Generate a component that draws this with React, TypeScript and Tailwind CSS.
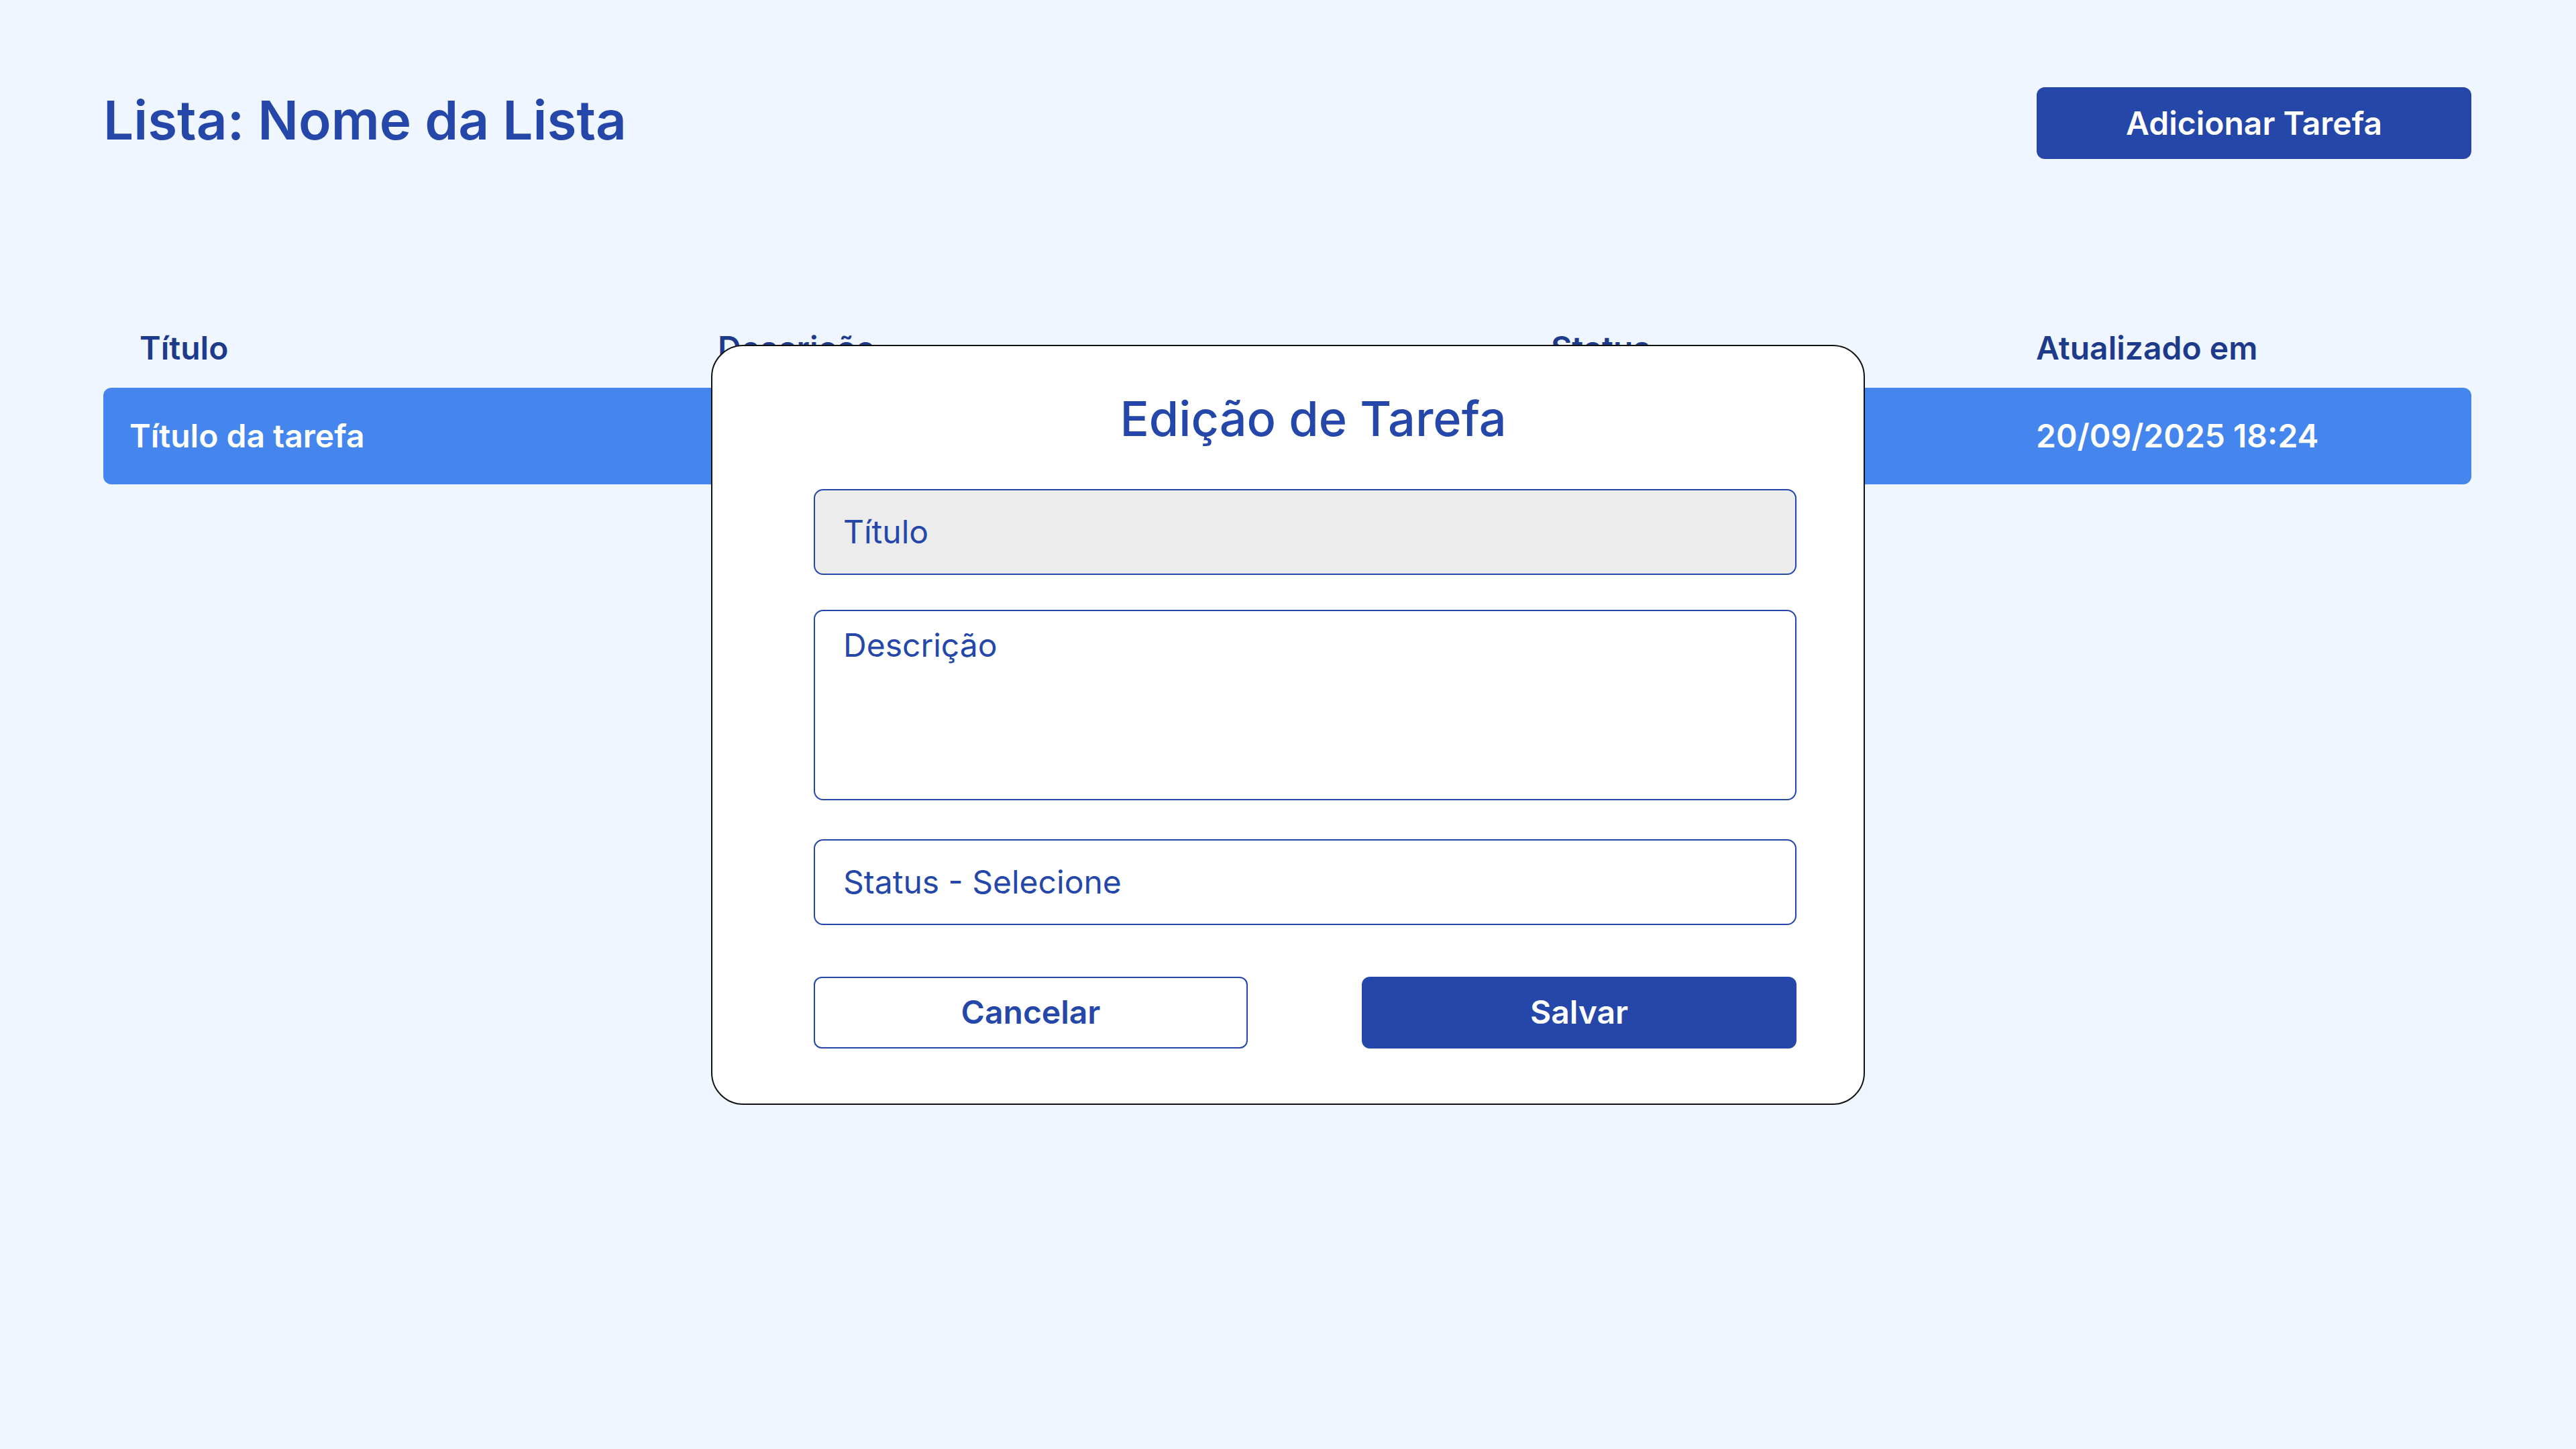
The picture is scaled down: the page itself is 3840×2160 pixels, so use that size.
import React from "react";

export default function App() {
  return (
    <div className="min-h-screen w-full bg-[#eff6ff] font-['Inter',sans-serif] pl-[154px] pr-[156px] relative">
      {/* Header */}
      <div className="flex items-start justify-between pt-[130px]">
        <h1 className="mt-[9px] text-[80px] leading-[80px] font-semibold text-[#2447a9]">
          Lista: Nome da Lista
        </h1>
        <button className="h-[107px] w-[648px] rounded-[12px] bg-[#2447a9] text-white text-[48px] leading-[48px] font-semibold">
          Adicionar Tarefa
        </button>
      </div>

      {/* Table */}
      <div className="mt-[258px]">
        <div className="grid grid-cols-[879px_1242px_721px_1fr] text-[48px] leading-[48px] font-semibold text-[#1e3a8a]">
          <div className="pl-[54px]">Título</div>
          <div className="pl-[37px]">Descrição</div>
          <div className="pl-[37px]">Status</div>
          <div className="pl-[39px]">Atualizado em</div>
        </div>
        <div className="mt-[35px] grid h-[144px] grid-cols-[879px_1242px_721px_1fr] items-center rounded-[12px] bg-[#4486ed] text-[48px] leading-[48px] font-semibold text-white">
          <div className="pl-[39px]">Título da tarefa</div>
          <div className="pl-[39px]">Descrição da tarefa</div>
          <div className="pl-[39px]">Pendente</div>
          <div className="pl-[39px]">20/09/2025 18:24</div>
        </div>
      </div>

      {/* Modal */}
      <div className="fixed inset-0 flex items-center justify-center">
        <div className="w-[1720px] rounded-[48px] border-2 border-[#111111] bg-white pl-[151px] pr-[100px] pt-[72px] pb-[82px]">
          <h2 className="pl-[24px] text-center text-[72px] leading-[72px] font-medium text-[#2447a9]">
            Edição de Tarefa
          </h2>
          <div className="mt-[69px] flex h-[128px] items-center rounded-[14px] border-2 border-[#2447a9] bg-[#ececec] px-[42px] text-[48px] leading-[48px] text-[#2447a9]">
            Título
          </div>
          <div className="mt-[52px] h-[284px] rounded-[14px] border-2 border-[#2447a9] bg-white px-[42px] pt-[27px] text-[48px] leading-[48px] text-[#2447a9]">
            Descrição
          </div>
          <div className="mt-[58px] flex h-[128px] items-center rounded-[14px] border-2 border-[#2447a9] bg-white px-[42px] text-[48px] leading-[48px] text-[#2447a9]">
            Status - Selecione
          </div>
          <div className="mt-[77px] flex justify-between">
            <button className="h-[107px] w-[647px] rounded-[12px] border-2 border-[#2447a9] bg-white text-[48px] leading-[48px] font-semibold text-[#2447a9]">
              Cancelar
            </button>
            <button className="h-[107px] w-[648px] rounded-[12px] bg-[#2447a9] text-[48px] leading-[48px] font-semibold text-white">
              Salvar
            </button>
          </div>
        </div>
      </div>
    </div>
  );
}
